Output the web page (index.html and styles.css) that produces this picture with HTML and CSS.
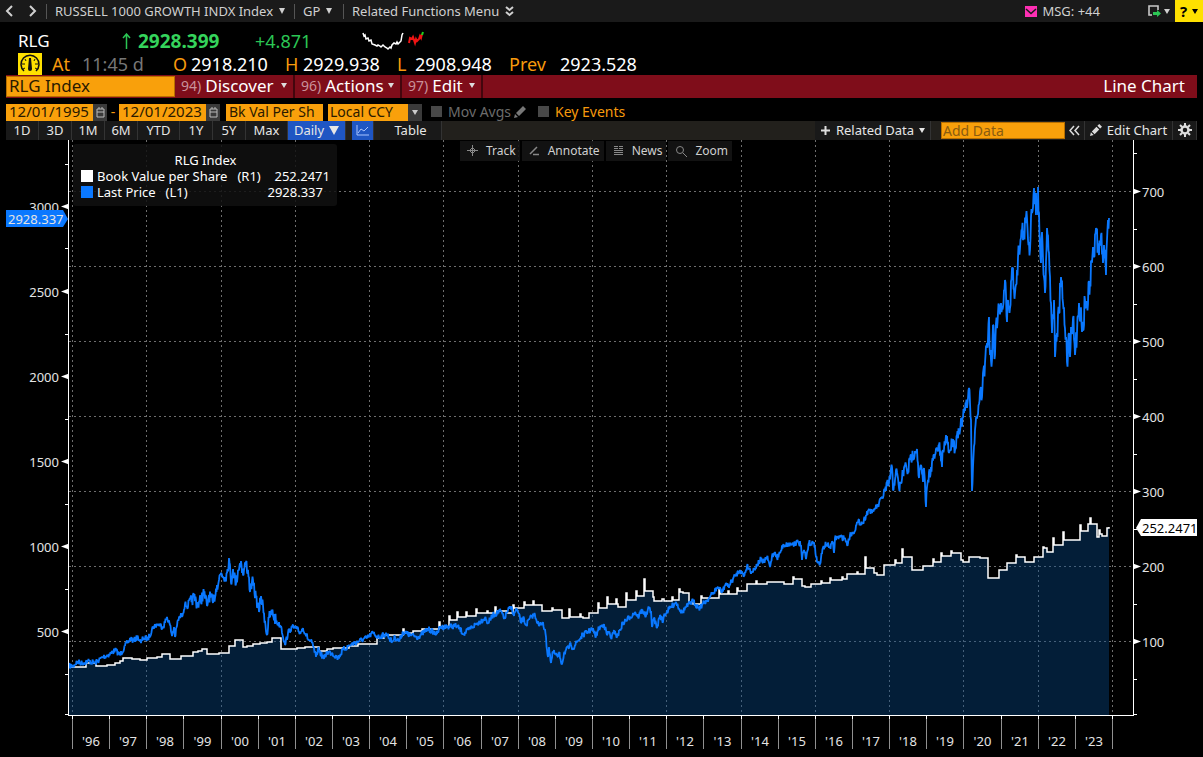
FILE: index.html
```
<!DOCTYPE html>
<html lang="en">
<head>
    <meta charset="UTF-8">
    <meta name="viewport" content="width=device-width, initial-scale=1.0">
    <title>RLG Index - Line Chart</title>
    <link rel="stylesheet" href="styles.css">
</head>
<body>
    <header class="topbar">
        <button class="nav-btn" aria-label="Back"><svg width="9" height="12" viewBox="0 0 9 12"><path d="M7 1L2 6l5 5"/></svg></button>
        <button class="nav-btn" aria-label="Forward"><svg width="9" height="12" viewBox="0 0 9 12"><path d="M2 1l5 5-5 5"/></svg></button>
        <button class="menu menu-security">RUSSELL 1000 GROWTH INDX Index <i class="caret"></i></button>
        <button class="menu menu-gp">GP <i class="caret"></i></button>
        <button class="menu menu-related">Related Functions Menu
            <svg width="9" height="11" viewBox="0 0 9 11"><path d="M1 1l3.500 3L8 1M1 6l3.500 3L8 6"/></svg>
        </button>
        <div class="topbar-right">
            <button class="msg">
                <svg width="12" height="11" viewBox="0 0 12 11"><path d="M0 0h12v11H0z" fill="#ff2fb4"/><path d="M1 3l5 4.500L11 3" fill="none" stroke="#1a1a1a" stroke-width="1.500"/></svg>
                MSG: +44
            </button>
            <button class="export" aria-label="Export">
                <svg width="13" height="12" viewBox="0 0 13 12"><path d="M4 10H1V1h9v4" fill="none" stroke="#c8c8c8" stroke-width="1.600"/><path d="M5 7h4V5l4 3.500L9 12v-2H5z" fill="#2bc554"/></svg>
                <i class="caret small"></i>
            </button>
            <button class="help">? <i class="caret small"></i></button>
        </div>
    </header>

    <section class="quote">
        <div class="quote-row">
            <span class="ticker">RLG</span>
            <svg class="arrow" width="9" height="16" viewBox="0 0 9 16"><path d="M4.500 16V1M1 5l3.500-4L8 5"/></svg>
            <b class="last">2928.399</b>
            <span class="change">+4.871</span>
            <svg class="spark" width="64" height="22" viewBox="0 0 64 22">
                <path class="spark-old" d="M1 3l1 3 1-1 1 4 2-1 1 3 2-1 1 4 3 1 2 1 1-1 2 1 1 1 2-2 2 2 2 1 1 1 2-2 1 1 1-3 2-2 2 1 1-2 1 2 2-2 1-1 1-6 1-2"/>
                <path class="spark-new" d="M47 13l1-5 2 1 1-2 2 6 1-4 1 2 2-2 1-3 1 2 1-4"/>
                <path class="spark-up" d="M60 5l1-3"/>
            </svg>
        </div>
        <div class="quote-row">
            <svg class="gauge" width="24" height="22" viewBox="0 0 24 22"><path d="M0 0h24v22H0z" fill="#ffe100"/><path d="M6 18a9 9 0 1 1 12 0" fill="none" stroke="#111" stroke-width="1.500"/><path d="M5 16l2-1M4 11h3M7 6l1 2M19 16l-2-1M20 11h-3M17 6l-1 2" stroke="#111"/><path d="M11 5h2l1 11a2 2 0 0 1-4 0z" fill="#111"/></svg>
            <span class="field at"><em>At</em> <span class="dim">11:45 d</span></span>
            <span class="field"><em>O</em> 2918.210</span>
            <span class="field"><em>H</em> 2929.938</span>
            <span class="field"><em>L</em> 2908.948</span>
            <span class="field prev"><em>Prev</em> 2923.528</span>
        </div>
    </section>

    <nav class="redbar">
        <input class="security" type="text" value="RLG Index" aria-label="Security">
        <button class="red-btn discover"><small>94)</small> Discover <i class="caret small"></i></button>
        <button class="red-btn actions"><small>96)</small> Actions <i class="caret small"></i></button>
        <button class="red-btn edit"><small>97)</small> Edit <i class="caret small"></i></button>
        <h1>Line Chart</h1>
    </nav>

    <div class="options">
        <input class="amber date" type="text" value="12/01/1995" aria-label="From">
        <button class="cal" aria-label="Pick start date"><svg width="9" height="11" viewBox="0 0 9 11"><path d="M1 2h7v8H1zM1 5h7M3 0v2M6 0v2"/></svg></button>
        <span class="dash">-</span>
        <input class="amber date" type="text" value="12/01/2023" aria-label="To">
        <button class="cal" aria-label="Pick end date"><svg width="9" height="11" viewBox="0 0 9 11"><path d="M1 2h7v8H1zM1 5h7M3 0v2M6 0v2"/></svg></button>
        <input class="amber field-name" type="text" value="Bk Val Per Sh" aria-label="Field">
        <span class="ccy">
            <select class="amber" aria-label="Currency"><option>Local CCY</option></select>
            <i class="caret small"></i>
        </span>
        <label class="check off"><input type="checkbox"> Mov Avgs
            <svg width="13" height="13" viewBox="0 0 13 13"><path d="M0 13l1-4 3 3zM2 8l7-7 3 3-7 7z" fill="#777"/></svg>
        </label>
        <label class="check"><input type="checkbox"> Key Events</label>
    </div>

    <div class="toolbar">
        <button class="tool range">1D</button>
        <button class="tool range">3D</button>
        <button class="tool range">1M</button>
        <button class="tool range">6M</button>
        <button class="tool ytd">YTD</button>
        <button class="tool range">1Y</button>
        <button class="tool range">5Y</button>
        <button class="tool max">Max</button>
        <button class="tool daily">Daily <i class="caret big"></i></button>
        <button class="tool line" aria-label="Line chart"><svg width="13" height="11" viewBox="0 0 13 11"><path d="M1 0v10h12M2 8l3-4 3 2 4-4" fill="none" stroke="#a9c4ff"/></svg></button>
        <button class="tool table">Table</button>
        <div class="toolbar-right">
            <button class="tool related"><svg width="11" height="11" viewBox="0 0 11 11"><path d="M5.500 1v9M1 5.500h9" stroke="#ddd" stroke-width="2"/></svg> Related Data <i class="caret small"></i></button>
            <input class="amber add-data" type="text" placeholder="Add Data" aria-label="Add Data">
            <button class="tool collapse" aria-label="Collapse"><svg width="11" height="11" viewBox="0 0 11 11"><path d="M5 1L1 5.500 5 10M10 1L6 5.500 10 10" fill="none" stroke="#ddd" stroke-width="1.500"/></svg></button>
            <button class="tool edit-chart"><svg width="12" height="12" viewBox="0 0 13 13"><path d="M0 13l1-4 3 3zM2 8l5-5 3 3-5 5zM8 2l2-2 3 3-2 2z" fill="#ddd"/></svg> Edit Chart</button>
            <button class="tool gear" aria-label="Settings"><svg width="14" height="14" viewBox="0 0 14 14"><g stroke="#ddd" fill="none"><circle cx="7" cy="7" r="3.500" stroke-width="2.500"/><path d="M7 0v3M7 11v3M0 7h3M11 7h3M2 2l2 2M10 10l2 2M2 12l2-2M10 4l2-2" stroke-width="2"/></g></svg></button>
        </div>
    </div>

    <main class="chart">
        <svg id="plot" class="plot" role="img" aria-label="RLG Index price and book value per share"></svg>

        <div class="legend">
            <div class="legend-title">RLG Index</div>
            <div class="legend-row"><i class="swatch white"></i> <span class="legend-name">Book Value per Share</span> <span>(R1)</span> <span class="value">252.2471</span></div>
            <div class="legend-row"><i class="swatch blue"></i> <span class="legend-name">Last Price</span> <span>(L1)</span> <span class="value short">2928.337</span></div>
        </div>

        <div class="chart-tools">
            <button><svg width="11" height="11" viewBox="0 0 11 11"><path d="M5.500 0v11M0 5.500h11M5.500 2.500l3 3-3 3-3-3z"/></svg> Track</button>
            <button><svg width="11" height="11" viewBox="0 0 11 11"><path d="M2 8l6-6M1 9l1-1M4 9.500h6" stroke-width="1.500"/></svg> Annotate</button>
            <button><svg width="11" height="11" viewBox="0 0 11 11"><path d="M1 1.500h4M1 3.500h4M6 1.500h4M6 3.500h4M1 5.500h9M1 7.500h9M1 9.500h9"/></svg> News</button>
            <button><svg width="12" height="12" viewBox="0 0 12 12"><circle cx="5" cy="5" r="3.500"/><path d="M8 8l4 4"/></svg> Zoom</button>
        </div>
    </main>
    <script src="script.js"></script>
</body>
</html>
```
FILE: styles.css
```
*{
    margin: 0;
    padding: 0;
    box-sizing: border-box;
}

body{
    min-height: 100vh;
    display: flex;
    flex-direction: column;
    background: #000;
    color: #fff;
    font-family: "Noto Sans", "Open Sans", sans-serif;
    font-size: 13px;
}

button, input, select{
    font: inherit;
    color: inherit;
    border: none;
    background: none;
    white-space: nowrap;
}

em{
    font-style: normal;
    color: #f79a0c;
}

.caret{
    display: inline-block;
    border: 4px solid transparent;
    border-top: 6px solid currentColor;
    border-bottom: none;
}

.caret.small{
    border-width: 3px;
    border-top-width: 5px;
    border-bottom: none;
}

.caret.big{
    border-width: 5px;
    border-top-width: 9px;
    border-bottom: none;
}

/* top bar */
.topbar{
    height: 22px;
    display: flex;
    align-items: center;
    background: #1a1a1a;
    color: #d0d0d0;
}

.topbar svg{
    flex: none;
}

.nav-btn{
    width: 23px;
    height: 22px;
    display: flex;
    align-items: center;
    justify-content: center;
    padding-right: 4px;
}

.nav-btn path, .menu-related path{
    fill: none;
    stroke: #d0d0d0;
    stroke-width: 2;
}

.menu{
    display: flex;
    align-items: center;
    gap: 6px;
    height: 15px;
    padding: 0 8px;
    border-left: 1px solid #555;
}

.menu .caret{
    border-width: 3px;
    border-top-width: 6px;
    border-bottom: none;
}

.menu-security{
    width: 248px;
}

.menu-gp{
    width: 49px;
}

.topbar-right{
    margin-left: auto;
    display: flex;
    align-items: center;
}

.msg, .export{
    display: flex;
    align-items: center;
    gap: 5px;
}

.export{
    margin: 0 5px 0 48px;
    gap: 3px;
}

.help{
    width: 28px;
    height: 22px;
    display: flex;
    align-items: center;
    justify-content: center;
    gap: 5px;
    background: #ffe100;
    color: #000;
    font-size: 15px;
    font-weight: 700;
}

/* quote lines */
.quote{
    padding: 8px 18px 0;
    font-size: 18px;
}

.quote-row{
    display: flex;
    align-items: center;
    height: 22px;
    line-height: 22px;
}

.quote-row + .quote-row{
    height: 23px;
}

.ticker{
    width: 104px;
    font-size: 17px;
}

.arrow path{
    fill: none;
    stroke: #2bc554;
    stroke-width: 1.500;
}

.last{
    width: 117px;
    margin-left: 7px;
    font-size: 19px;
    color: #35d45c;
}

.change{
    width: 107px;
    color: #2bc554;
}

.spark path{
    fill: none;
    stroke: #fff;
    stroke-width: 1.500;
}

.spark .spark-new{
    stroke: #f01414;
    stroke-width: 2;
}

.spark .spark-up{
    stroke: #1bd01b;
    stroke-width: 2;
}

.field{
    display: flex;
    width: 112px;
}

.field em{
    flex: none;
    width: 18px;
}

.field.at{
    width: 131px;
    padding-left: 10px;
}

.field.at em{
    width: 30px;
}

.field.prev{
    width: 130px;
}

.field.prev em{
    width: 51px;
}

.dim{
    color: #777;
}

/* command bar */
.redbar{
    display: flex;
    align-items: center;
    height: 23px;
    margin: 0 6px;
    background: #7f0d1a;
    font-size: 17px;
    line-height: 20px;
}

.security{
    width: 169px;
    height: 21px;
    padding: 0 2px 2px;
    background: #f9a00b;
    color: #2a1a00;
    border: 1px solid #b86f00;
}

.red-btn{
    display: flex;
    align-items: center;
    gap: 4px;
    height: 23px;
    padding: 0 6px 2px;
    border-right: 2px solid #43060d;
}

.red-btn .caret{
    margin-left: auto;
    color: #ddd;
}

.red-btn small{
    font-size: 14px;
    color: #c9929a;
}

.discover{
    width: 120px;
}

.actions{
    width: 107px;
}

.edit{
    width: 81px;
}

.redbar h1{
    margin-left: auto;
    padding: 0 12px 2px 0;
    font-size: 17px;
    font-weight: 400;
}

/* option line */
.options{
    display: flex;
    align-items: center;
    height: 18px;
    margin: 5px 6px 0;
    font-size: 14px;
    line-height: 16px;
}

.amber{
    height: 17px;
    padding: 0 3px 2px;
    background: #f9a00b;
    color: #2a1a00;
}

.date{
    width: 87px;
    font-size: 15px;
}

.cal{
    width: 14px;
    height: 17px;
    display: flex;
    align-items: center;
    justify-content: center;
    background: #3a3a3a;
}

.cal path{
    fill: none;
    stroke: #bbb;
}

.dash{
    width: 12px;
    text-align: center;
    color: #f79a0c;
}

.field-name{
    width: 97px;
    margin: 0 5px 0 6px;
}

.ccy{
    display: flex;
    align-items: center;
    width: 94px;
    background: #3a3a3a;
}

.ccy select{
    width: 80px;
    padding: 0 2px 2px;
    appearance: none;
}

.ccy .caret{
    margin: auto;
    color: #ccc;
}

.check{
    display: flex;
    align-items: center;
    gap: 6px;
    margin-left: 9px;
    padding-bottom: 1px;
    color: #f79a0c;
}

.check.off{
    margin-right: 2px;
    color: #6c6c6c;
}

.check input{
    appearance: none;
    width: 11px;
    height: 11px;
    background: #484848;
}

.check svg{
    margin-left: -3px;
}

/* chart toolbar */
.toolbar{
    display: flex;
    align-items: center;
    height: 19px;
    margin: 0 6px;
    background: #22201c;
}

.tool{
    display: flex;
    align-items: center;
    justify-content: center;
    gap: 5px;
    height: 19px;
    padding-bottom: 1px;
    background: #191919;
    border-right: 1px solid #333;
    color: #e6e6e6;
}

.range{
    width: 33px;
}

.ytd{
    width: 42px;
}

.max{
    width: 42px;
}

.daily{
    width: 58px;
    background: #1f56c3;
}

.line{
    width: 22px;
    margin: 0 6px;
    background: #1f56c3;
}

.table{
    width: 62px;
}

.toolbar-right{
    margin-left: auto;
    display: flex;
    align-items: center;
}

.related{
    width: 116px;
    margin-right: 10px;
}

.add-data{
    width: 124px;
    height: 17px;
    padding: 0 1px;
    font-size: 14px;
    border: 1px solid #b86f00;
}

.add-data::placeholder{
    color: #8a5c10;
    opacity: 1;
}

.collapse{
    width: 20px;
}

.edit-chart{
    width: 88px;
}

.gear{
    width: 24px;
}

/* chart */
.chart{
    position: relative;
    flex: 1;
    min-height: 400px;
}

.plot{
    position: absolute;
    width: 100%;
    height: 100%;
    font-size: 13px;
    fill: #e4e4e4;
}

.grid{
    fill: none;
    stroke: #6e6e6e;
    stroke-dasharray: 2 3;
    shape-rendering: crispEdges;
}

.area{
    fill: rgba(8, 75, 140, 0.4);
}

.book{
    fill: none;
    stroke: #fff;
    stroke-width: 1.500;
}

.price{
    fill: none;
    stroke: #0a78ff;
    stroke-width: 1.800;
    stroke-linejoin: bevel;
}

.axis{
    fill: none;
    stroke: #fff;
    shape-rendering: crispEdges;
}

.year-line{
    stroke: #909090;
    shape-rendering: crispEdges;
}

.pointer{
    fill: #fff;
}

.tag-price{
    fill: #0a78ff;
}

.tag-book{
    fill: #fff;
}

.tag-book-text{
    fill: #000;
}

.legend{
    position: absolute;
    left: 73px;
    top: 4px;
    width: 264px;
    padding: 8px 7px 6px 8px;
    border-radius: 3px;
    background: rgba(16, 16, 16, 0.85);
    line-height: 16px;
}

.legend-title{
    text-align: center;
}

.legend-row{
    display: flex;
    align-items: center;
}

.swatch{
    width: 12px;
    height: 12px;
    margin-right: 4px;
}

.swatch.white{
    background: #fff;
}

.swatch.blue{
    background: #0a78ff;
}

.legend-name{
    margin-right: 10px;
}

.value{
    margin-left: auto;
}

.value.short{
    margin-right: 7px;
}

.chart-tools{
    position: absolute;
    left: 460px;
    top: 1px;
    display: flex;
    gap: 2px;
}

.chart-tools button{
    display: flex;
    align-items: center;
    gap: 8px;
    height: 20px;
    padding: 0 4px 1px 7px;
    background: rgba(20, 20, 20, 0.9);
    color: #d0d0d0;
    font-size: 12px;
}

.chart-tools svg{
    fill: none;
    stroke: #888;
}
```
FILE: script.js
```
const plot = document.getElementById("plot");

// edges of the plot area and the size of the sheet the series are stored on
const LEFT = 69, RIGHT = 70, BOTTOM = 42;
const SHEET = { x: 69, y: 140, width: 1064, height: 575 };

// last price, "x,y" pairs
const price = `69,666 73,666 77,662 82,663 88,661 95,663 103,657 110,654 115,650 120,655 125,646 131,638 133,641 138,637 141,643
143,638 148,639 153,627 158,624 163,627 167,617 170,625 172,636 174,627 175,637 178,620 183,613 185,604 188,607 192,600 194,597
198,605 204,593 207,606 209,595 213,603 217,585 221,573 225,577 227,573 229,558 231,583 233,569 236,584 238,570 241,561 243,575
246,562 249,577 250,592 252,581 256,597 259,612 261,596 264,613 267,635 269,618 272,612 277,623 281,626 285,645 288,633 292,627
297,629 300,633 303,628 308,639 312,643 316,657 318,649 324,659 327,652 332,653 338,658 343,650 350,645 359,641 367,638 373,633
378,637 387,634 392,642 395,637 399,641 403,632 410,635 418,637 428,629 437,634 440,627 457,626 464,634 472,627 485,618 488,623
493,615 501,611 504,619 508,610 512,608 514,616 516,609 518,612 521,623 523,618 526,625 532,616 535,615 539,626 543,622 546,637
547,650 548,657 549,647 551,663 553,652 558,657 559,653 562,664 564,653 571,645 573,648 577,642 583,635 592,629 596,636 599,628
604,624 607,635 609,632 611,638 615,631 617,637 623,623 630,617 635,612 638,617 642,610 646,616 649,608 651,611 652,627 654,618
657,628 660,615 663,622 664,615 670,608 676,602 682,613 685,608 693,601 699,608 702,605 710,597 718,587 722,592 726,583 728,587
735,576 740,570 744,576 747,566 752,572 757,565 761,559 763,563 767,557 770,567 772,556 775,552 777,558 780,553 783,545 792,544
798,542 801,545 802,560 804,550 806,559 809,543 813,543 815,547 817,562 820,564 823,548 826,544 830,547 833,543 834,553 835,538
840,537 845,538 847,545 850,535 853,533 858,522 863,523 866,515 869,509 872,513 875,508 878,506 882,497 885,491 889,483 892,467
893,490 896,470 899,488 901,483 903,473 906,465 908,472 910,460 915,451 917,449 919,478 921,465 923,482 924,468 926,507 927,487
928,480 931,467 935,455 939,445 942,467 943,450 947,436 949,453 953,439 955,450 957,435 963,418 966,403 967,408 969,388 971,420
972,491 973,467 975,430 979,404 981,387 982,397 983,373 985,363 987,343 989,317 990,355 992,360 993,325 995,355 996,323 998,313
1001,303 1003,307 1005,280 1007,322 1008,300 1010,308 1012,268 1015,293 1017,270 1019,250 1021,238 1022,230 1024,235 1026,217
1030,250 1031,217 1034,188 1036,215 1036,193 1038,215 1038,187 1039,213 1041,263 1042,232 1044,277 1045,293 1047,228 1049,253
1051,303 1052,333 1054,300 1055,357 1057,333 1059,313 1061,277 1063,303 1066,337 1067,362 1069,333 1070,357 1071,327 1073,318
1075,355 1077,333 1079,303 1083,330 1085,300 1087,303 1090,283 1093,247 1094,257 1096,228 1099,255 1101,235 1103,263 1104,245
1106,275 1107,240 1108,220 1109,218`;

// book value holds its level until the next report; a third number is a spike at that date
const book = `69,667 86,663 96,666 107,665 115,663 120,661 123,658 132,659 140,660 147,658 157,657 162,654 170,659 181,656 193,652
198,651 202,649 207,654 219,653 229,646 235,640 243,647 247,646 253,644 260,643 267,642 272,638 281,649 297,648 305,647 319,651
327,649 333,648 349,646 358,644 377,638 384,635 403,633,629 413,631 422,629 439,627,622 449,620,616 457,617,612 466,616,612
476,613,609 487,613,611 495,611,607 507,613 513,608,605 524,605,602 533,605,601 542,611 552,610,608 562,618 569,617,609 580,617,614
583,618 589,613 598,608,603 607,604,597 616,604,599 618,607 626,600,593 636,596,591 644,591,579 653,601,597 662,599 664,601
672,600,597 679,592,589 683,593 689,603 693,604 701,598,596 719,594,589 728,594,591 737,591,588 747,584 756,584,581 767,582 776,582
784,584 793,579,577 802,586 805,587 811,584 821,583,581 830,580,578 842,579,577 847,574 857,574,572 865,568,557 874,573 877,575
884,565 895,563,560 902,557,549 912,570 923,566 933,562,559 941,556,553 951,553,551 961,560 963,562 969,557 980,558 988,578
999,570 1007,563 1016,557,555 1025,562 1034,557 1043,548,547 1047,552 1053,545,538 1063,540,532 1080,531,525 1088,524
1090,524,518 1097,537 1099,534,530 1102,536 1107,528 1109,527`;

function parse(text){
    return text.trim().split(/\s+/).map(pair => pair.split(",").map(Number));
}

function draw(){
    const width = plot.clientWidth;
    const height = plot.clientHeight;
    const right = width - RIGHT;
    const bottom = height - BOTTOM;
    const sx = x => LEFT + (x - SHEET.x) / SHEET.width * (right - LEFT);
    const sy = y => (y - SHEET.y) / SHEET.height * bottom;
    const year = y => Math.round(sx(72 + (y - 1996) * 1040 / 28)) + 0.5;
    const leftY = v => Math.round(sy(716 - v * 0.17)) + 0.5;
    const rightY = v => Math.round(sy(716 - v * 0.75)) + 0.5;
    let out = "";

    // grid
    let grid = "";
    for(let y = 1996; y <= 2024; y += 2){
        grid += `M${year(y)} 0V${bottom}`;
    }
    for(let v = 100; v <= 700; v += 100){
        grid += `M${LEFT} ${rightY(v)}H${right}`;
    }
    out += `<path class="grid" d="${grid}"/>`;

    // book value
    let line = "";
    parse(book).forEach((p, i) => {
        const x = sx(p[0]);
        line += i == 0 ? `M${x} ${sy(p[1])}` : `H${x}`;
        if(p[2]){
            line += `V${sy(p[2])}h1`;
        }
        line += `V${sy(p[1])}`;
    });
    out += `<path class="area" d="${line}V${bottom}H${LEFT}z"/><path class="book" d="${line}"/>`;

    let seed = 7;
    const random = () => {
        seed = (seed * 16807) % 2147483647;
        return seed / 2147483647 - 0.5;
    };
    const points = parse(price);
    let path = "";
    points.forEach((p, i) => {
        path += `${i ? "L" : "M"}${sx(p[0])} ${sy(p[1])}`;
        const next = points[i + 1];
        if(next){
            const swing = p[0] > 980 ? 24 : p[0] > 880 ? 13 : p[0] > 185 && p[0] < 275 ? 13 : 6;
            const steps = Math.floor((next[0] - p[0]) / 0.5);
            for(let k = 1; k < steps; k++){
                const t = k / steps;
                path += `L${sx(p[0] + (next[0] - p[0]) * t)} ${sy(p[1] + (next[1] - p[1]) * t + random() * swing)}`;
            }
        }
    });
    out += `<path class="price" d="${path}"/>`;

    // axes
    let axis = `M${LEFT - 0.5} 0V${bottom + 0.5}H${right + 0.5}V0`;
    for(let v = 250; v <= 3250; v += 500){
        axis += `M${LEFT} ${leftY(v)}h-4`;
    }
    for(let v = 50; v <= 750; v += 100){
        axis += `M${right} ${rightY(v)}h4`;
    }
    axis += `M${LEFT} ${bottom - 0.5}h-4M${right} ${bottom - 0.5}h4`;
    for(let v = 500; v <= 3000; v += 500){
        const y = leftY(v);
        out += `<path class="pointer" d="M${LEFT} ${y - 3}v6l-8-3z"/><text x="59" y="${y + 5}" text-anchor="end">${v}</text>`;
    }
    for(let v = 100; v <= 700; v += 100){
        const y = rightY(v);
        out += `<path class="pointer" d="M${right} ${y - 3}v6l8-3z"/><text x="${right + 9}" y="${y + 5}">${v}</text>`;
    }
    for(let y = 1996; y <= 2024; y++){
        out += `<path class="year-line" d="M${year(y)} ${bottom + 1}v33"/>`;
        axis += `M${year(y)} ${bottom}v4`;
        if(y < 2024){
            out += `<text x="${(year(y) + year(y + 1)) / 2}" y="${bottom + 31}" text-anchor="middle">'${String(y).slice(2)}</text>`;
        }
    }
    out += `<path class="axis" d="${axis}"/>`;

    // current values
    const p = Math.round(sy(219));
    const b = Math.round(sy(528));
    out += `<path class="tag-price" d="M6 ${p - 9}h57l5 9-5 8H6z"/><text x="8" y="${p + 5}">2928.337</text>`;
    out += `<path class="tag-book" d="M${width - 6} ${b - 9}h-56l-5 9 5 8h56z"/><text class="tag-book-text" x="${width - 61}" y="${b + 5}">252.2471</text>`;
    plot.innerHTML = out;
}

draw();
window.addEventListener("resize", draw);
```
